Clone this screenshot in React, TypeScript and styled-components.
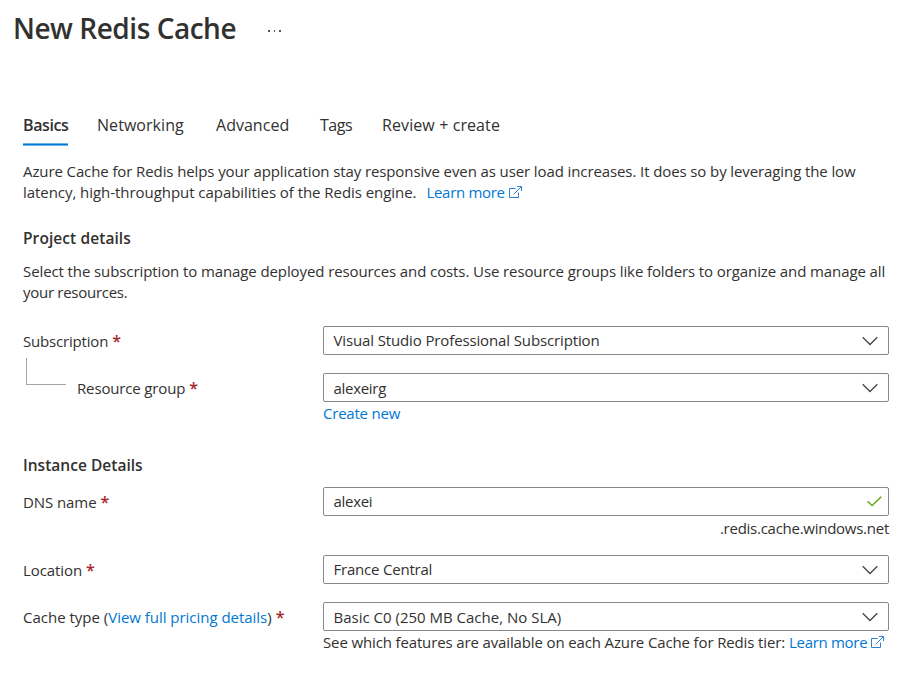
import React from "react";
import styled, { createGlobalStyle } from "styled-components";

const GlobalStyle = createGlobalStyle`
  * { box-sizing: border-box; }
  body {
    margin: 0;
    background: #fff;
    color: #323130;
    font-family: "Open Sans", "Noto Sans", sans-serif;
    font-size: 15px;
    line-height: 21px;
  }
`;

const Page = styled.main`
  width: 904px;
  height: 678px;
  overflow: hidden;
  display: flex;
  flex-direction: column;
`;

const Header = styled.header`
  display: flex;
  align-items: flex-start;
  gap: 32px;
  height: 115px;
  padding: 9px 0 0 13px;
`;

const Title = styled.h1`
  margin: 0;
  font-size: 28px;
  line-height: 38px;
  font-weight: 600;
  letter-spacing: -0.47px;
  white-space: nowrap;
`;

const MoreButton = styled.button`
  display: flex;
  gap: 4px;
  margin: 21px 0 0;
  padding: 0;
  border: 0;
  background: none;

  &::before,
  &::after,
  & > i {
    content: "";
    width: 1.5px;
    height: 1.5px;
    background: #55534f;
  }
`;

const Body = styled.div`
  display: flex;
  flex-direction: column;
  width: 889px;
  padding-left: 23px;
`;

const Tabs = styled.nav`
  display: flex;
  height: 31px;
  margin-bottom: 15px;
`;

const Tab = styled.a<{ $width: number; $spacing: number; $active?: boolean }>`
  flex: none;
  width: ${(p) => p.$width}px;
  font-size: 16px;
  line-height: 20px;
  font-weight: ${(p) => (p.$active ? 600 : 400)};
  letter-spacing: ${(p) => p.$spacing}px;
  white-space: nowrap;
`;

const ActiveLabel = styled.span`
  display: inline-block;
  width: 45px;
  height: 31px;
  background: linear-gradient(#6db3e8 0 1px, #0078d4 1px 2px, #6db3e8 2px) 0 28px / 100% 3px no-repeat;
`;

const Tracked = styled.span<{ $spacing: number }>`
  letter-spacing: ${(p) => p.$spacing}px;
  white-space: nowrap;
`;

const Paragraph = styled.p`
  display: flex;
  flex-direction: column;
  margin: 0;
`;

const Line = styled.span`
  display: flex;
  white-space: pre;
`;

const SectionTitle = styled.h2<{ $top: number; $bottom: number; $spacing: number }>`
  margin: ${(p) => p.$top}px 0 ${(p) => p.$bottom}px;
  font-size: 15.5px;
  line-height: 21px;
  font-weight: 600;
  letter-spacing: ${(p) => p.$spacing}px;
`;

const Link = styled.a<{ $spacing?: number; $indent?: number }>`
  display: inline-flex;
  margin-left: ${(p) => p.$indent ?? 0}px;
  color: #0078d4;
  letter-spacing: ${(p) => p.$spacing ?? 0}px;
  white-space: pre;

  svg {
    margin: 4px 0 0 4px;
    flex: none;
  }
`;

const FormRow = styled.div<{ $height: number; $top?: number }>`
  display: grid;
  grid-template-columns: 300px 566px;
  height: ${(p) => p.$height}px;
  margin-top: ${(p) => p.$top ?? 0}px;
`;

const Label = styled.label<{ $spacing: number }>`
  display: flex;
  padding-top: 5px;
  letter-spacing: ${(p) => p.$spacing}px;
  white-space: pre;
`;

const Star = styled.span`
  margin-left: 4px;
  color: #a4262c;
  font-size: 16px;
  font-weight: 600;
  letter-spacing: 0;
`;

const Branch = styled.span`
  width: 40px;
  height: 27px;
  margin: -20px 11px 0 3px;
  border: solid #a6a5a4;
  border-width: 0 0 1px 1px;
`;

const Field = styled.div`
  display: flex;
  flex-direction: column;
`;

const Control = styled.div<{ $textTop: number; $spacing: number; $valid?: boolean }>`
  display: flex;
  align-items: flex-start;
  justify-content: space-between;
  flex: none;
  height: 29px;
  padding: ${(p) => p.$textTop}px ${(p) => (p.$valid ? 6 : 10)}px 0 9.5px;
  border: 1px solid #8a8886;
  border-radius: 2px;
  letter-spacing: ${(p) => p.$spacing}px;

  svg {
    flex: none;
    margin-top: ${(p) => (p.$valid ? 8 : 9) - p.$textTop}px;
  }
`;

const Below = styled.div<{ $end?: boolean }>`
  display: flex;
  justify-content: ${(p) => (p.$end ? "flex-end" : "flex-start")};
  margin-top: ${(p) => (p.$end ? 2 : 1)}px;
  white-space: pre;
`;

const Chevron = () => (
  <svg width="16" height="10" viewBox="0 0 16 10" fill="none" stroke="#484644" strokeWidth="1.3">
    <path d="M.7 1.2 8 8.5l7.3-7.3" />
  </svg>
);

const Check = () => (
  <svg width="15" height="11" viewBox="0 0 15 11" fill="none" stroke="#57a300" strokeWidth="1.3">
    <path d="m.7 5.3 4.4 4.3L14.2.7" />
  </svg>
);

const External = () => (
  <svg width="13" height="13" viewBox="0 0 13 13" fill="none" stroke="#2f80d8" strokeWidth="1">
    <path d="M6.5 2.5h-6v9h9V6.5" />
    <path d="M8 .5h4.5V5M12.3.7 4.5 8.5" />
  </svg>
);

export default function App() {
  return (
    <>
      <GlobalStyle />
      <Page>
        <Header>
          <Title>New Redis Cache</Title>
          <MoreButton aria-label="More">
            <i />
          </MoreButton>
        </Header>
        <Body>
          <Tabs>
            <Tab $width={74} $spacing={-0.4} $active>
              <ActiveLabel>Basics</ActiveLabel>
            </Tab>
            <Tab $width={119} $spacing={0.05}>Networking</Tab>
            <Tab $width={104} $spacing={0.02}>Advanced</Tab>
            <Tab $width={62} $spacing={-0.5}>Tags</Tab>
            <Tab $width={130} $spacing={0.1}>Review + create</Tab>
          </Tabs>

          <Paragraph>
            <Tracked $spacing={-0.104}>
              Azure Cache for Redis helps your application stay responsive even as user load increases. It does so by leveraging the low
            </Tracked>
            <Line>
              <Tracked $spacing={-0.05}>latency, high-throughput capabilities of the Redis engine.</Tracked>
              <Link $spacing={-0.32} $indent={10}>
                Learn more
                <External />
              </Link>
            </Line>
          </Paragraph>

          <SectionTitle $top={25} $bottom={12} $spacing={0.08}>Project details</SectionTitle>
          <Paragraph>
            <Tracked $spacing={-0.1}>
              Select the subscription to manage deployed resources and costs. Use resource groups like folders to organize and manage all
            </Tracked>
            <Tracked $spacing={-0.28}>your resources.</Tracked>
          </Paragraph>

          <FormRow $height={47} $top={23}>
            <Label $spacing={-0.18}>
              Subscription<Star>*</Star>
            </Label>
            <Field>
              <Control $textTop={3} $spacing={-0.13}>
                Visual Studio Professional Subscription
                <Chevron />
              </Control>
            </Field>
          </FormRow>
          <FormRow $height={81}>
            <Label $spacing={-0.15}>
              <Branch />
              Resource group<Star>*</Star>
            </Label>
            <Field>
              <Control $textTop={4} $spacing={-0.3}>
                alexeirg
                <Chevron />
              </Control>
              <Below>
                <Link $spacing={-0.22}>Create new</Link>
              </Below>
            </Field>
          </FormRow>

          <SectionTitle $top={1} $bottom={11} $spacing={0.02}>Instance Details</SectionTitle>
          <FormRow $height={68}>
            <Label $spacing={-0.08}>
              DNS name<Star>*</Star>
            </Label>
            <Field>
              <Control $textTop={3} $spacing={-0.3} $valid>
                alexei
                <Check />
              </Control>
              <Below $end>
                <Tracked $spacing={-0.26}>.redis.cache.windows.net</Tracked>
              </Below>
            </Field>
          </FormRow>
          <FormRow $height={47}>
            <Label $spacing={-0.08}>
              Location<Star>*</Star>
            </Label>
            <Field>
              <Control $textTop={3} $spacing={-0.21}>
                France Central
                <Chevron />
              </Control>
            </Field>
          </FormRow>
          <FormRow $height={60}>
            <Label $spacing={0}>
              Cache type (<Link $spacing={-0.03}>View full pricing details</Link>)<Star>*</Star>
            </Label>
            <Field>
              <Control $textTop={4} $spacing={0}>
                Basic C0 (250 MB Cache, No SLA)
                <Chevron />
              </Control>
              <Below>
                <Tracked $spacing={-0.135}>See which features are available on each Azure Cache for Redis tier:</Tracked>
                <Link $spacing={-0.3} $indent={4}>
                  Learn more
                  <External />
                </Link>
              </Below>
            </Field>
          </FormRow>
        </Body>
      </Page>
    </>
  );
}
